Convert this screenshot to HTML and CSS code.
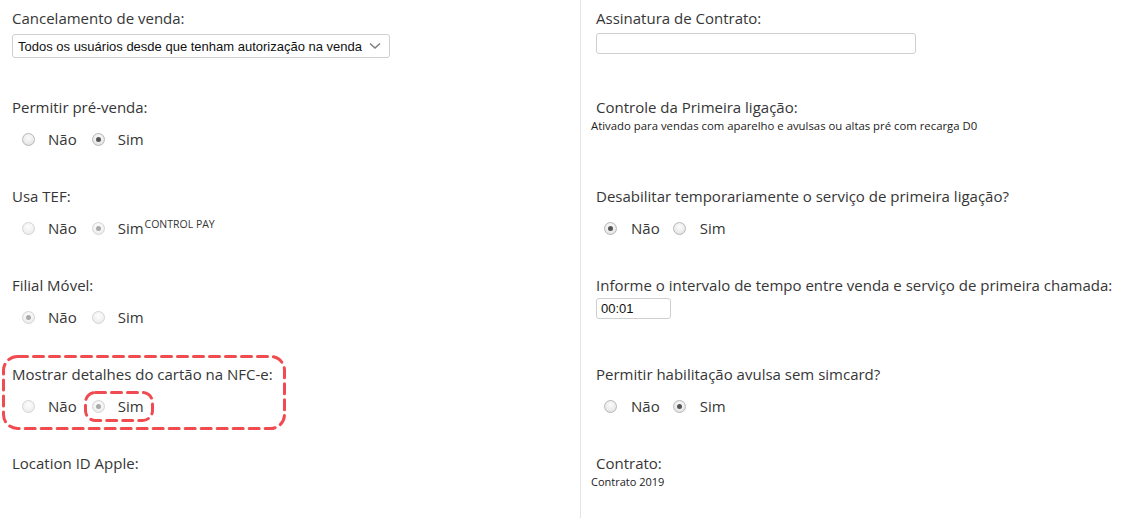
FILE: index.html
```html
<!DOCTYPE html>
<html lang="pt-BR">
<head>
<meta charset="utf-8">
<title>Configurações</title>
<link rel="stylesheet" href="styles.css">
</head>
<body>
<div class="page">
  <div class="col col-left">
    <div class="field">
      <div class="label">Cancelamento de venda:</div>
      <div class="select">
        <span class="select-text">Todos os usuários desde que tenham autorização na venda</span>
        <svg class="chev" width="12" height="8" viewBox="0 0 12 8"><path d="M1 1.5 L6 6 L11 1.5" fill="none" stroke="#7a7a7a" stroke-width="1.4"/></svg>
      </div>
    </div>
    <div class="field">
      <div class="label">Permitir pré-venda:</div>
      <div class="radios">
        <label class="opt"><input type="radio" name="pv"><span>Não</span></label>
        <label class="opt"><input type="radio" name="pv" checked><span>Sim</span></label>
      </div>
    </div>
    <div class="field">
      <div class="label">Usa TEF:</div>
      <div class="radios">
        <label class="opt"><input type="radio" name="tef" disabled><span>Não</span></label>
        <label class="opt"><input type="radio" name="tef" checked disabled><span>Sim<sup>CONTROL PAY</sup></span></label>
      </div>
    </div>
    <div class="field">
      <div class="label">Filial Móvel:</div>
      <div class="radios">
        <label class="opt"><input type="radio" name="fm" checked disabled><span>Não</span></label>
        <label class="opt"><input type="radio" name="fm" disabled><span>Sim</span></label>
      </div>
    </div>
    <div class="field field-marked">
      <div class="label">Mostrar detalhes do cartão na NFC-e:</div>
      <div class="radios">
        <label class="opt"><input type="radio" name="nfc" disabled><span>Não</span></label>
        <label class="opt"><input type="radio" name="nfc" checked disabled><span>Sim</span></label>
      </div>
      <svg class="mark mark-outer" width="284" height="75" viewBox="0 0 284 75"><rect x="1.5" y="1.5" width="281" height="72" rx="14" ry="14" fill="none" stroke="#ef4b50" stroke-width="3" stroke-dasharray="10 6" stroke-linecap="round"/></svg>
      <svg class="mark mark-inner" width="70" height="31" viewBox="0 0 70 31"><rect x="1.5" y="1.5" width="67" height="28" rx="10" ry="10" fill="none" stroke="#ef4b50" stroke-width="3" stroke-dasharray="10 6" stroke-linecap="round"/></svg>
    </div>
    <div class="field">
      <div class="label">Location ID Apple:</div>
    </div>
  </div>
  <div class="col col-right">
    <div class="field">
      <div class="label">Assinatura de Contrato:</div>
      <input class="text-input wide" type="text">
    </div>
    <div class="field">
      <div class="label">Controle da Primeira ligação:</div>
      <div class="note note-long">Ativado para vendas com aparelho e avulsas ou altas pré com recarga D0</div>
    </div>
    <div class="field">
      <div class="label">Desabilitar temporariamente o serviço de primeira ligação?</div>
      <div class="radios radios-right">
        <label class="opt"><input type="radio" name="dis" checked><span>Não</span></label>
        <label class="opt"><input type="radio" name="dis"><span>Sim</span></label>
      </div>
    </div>
    <div class="field">
      <div class="label">Informe o intervalo de tempo entre venda e serviço de primeira chamada:</div>
      <input class="text-input time" type="text" value="00:01">
    </div>
    <div class="field">
      <div class="label">Permitir habilitação avulsa sem simcard?</div>
      <div class="radios radios-right">
        <label class="opt"><input type="radio" name="hab"><span>Não</span></label>
        <label class="opt"><input type="radio" name="hab" checked><span>Sim</span></label>
      </div>
    </div>
    <div class="field">
      <div class="label">Contrato:</div>
      <div class="note">Contrato 2019</div>
    </div>
  </div>
</div>
</body>
</html>
```

FILE: styles.css
```css
* { box-sizing: border-box; }
html, body { margin: 0; padding: 0; background: #fff; }
body {
  font-family: "Open Sans", "Liberation Sans", sans-serif;
  color: #363636;
  font-size: 15px;
}
.page {
  display: grid;
  grid-template-columns: 581px 1fr;
  height: 518px;
}
.col {
  padding-top: 8px;
}
.col-left {
  padding-left: 12px;
  border-right: 1px solid #e4e4e4;
}
.col-right {
  padding-left: 15px;
}
.field {
  height: 89px;
  position: relative;
}
.label {
  line-height: 20px;
  height: 20px;
  white-space: nowrap;
}
.select {
  margin-top: 6px;
  width: 378px;
  height: 24px;
  border: 1px solid #cfcfcf;
  border-radius: 3px;
  display: flex;
  align-items: center;
  justify-content: space-between;
  padding: 0 8px 0 5px;
  font-family: "Liberation Sans", Arial, sans-serif;
  font-size: 13px;
  color: #111;
}
.chev { display: block; }
.radios {
  margin-top: 10px;
  height: 24px;
  display: flex;
  align-items: center;
  padding-left: 10px;
  gap: 15px;
}
.radios-right {
  padding-left: 8px;
  gap: 13px;
}
.opt {
  display: flex;
  align-items: center;
  gap: 13px;
  font-size: 15px;
  line-height: 24px;
}
.radios-right .opt { gap: 14px; }
.opt sup {
  font-size: 10.5px;
  vertical-align: top;
  position: relative;
  top: -4px;
  margin-left: 1px;
}
.opt input {
  -webkit-appearance: none;
  appearance: none;
  margin: 0;
  width: 13px;
  height: 13px;
  border-radius: 50%;
  border: 1px solid #b8b8b8;
  background: radial-gradient(circle at 50% 35%, #fbfbfb 0%, #ececec 55%, #d9d9d9 100%);
  position: relative;
  flex: none;
}
.opt input:checked::after {
  content: "";
  position: absolute;
  left: 3px;
  top: 3px;
  width: 5px;
  height: 5px;
  border-radius: 50%;
  background: #555;
}
.opt input:disabled {
  border-color: #d4d4d4;
  background: radial-gradient(circle at 50% 35%, #fdfdfd 0%, #f1f1f1 60%, #e6e6e6 100%);
}
.opt input:disabled:checked::after {
  background: #a9a9a9;
}
.note {
  margin-top: 2px;
  margin-left: -5px;
  font-size: 11px;
  line-height: 14px;
  color: #222;
}
.note-long { font-size: 11.35px; }
.text-input {
  display: block;
  margin-top: 5px;
  height: 21px;
  border: 1px solid #cfcfcf;
  border-radius: 3px;
  padding: 0 4px;
  font-family: "Liberation Sans", Arial, sans-serif;
  font-size: 13px;
  color: #111;
  background: #fff;
  outline: none;
}
.wide { width: 320px; }
.time { width: 75px; margin-top: 3px; }
.mark {
  position: absolute;
  pointer-events: none;
  display: block;
}
.mark-outer {
  left: -10px;
  top: -9px;
}
.mark-inner {
  left: 72px;
  top: 27px;
}
```
